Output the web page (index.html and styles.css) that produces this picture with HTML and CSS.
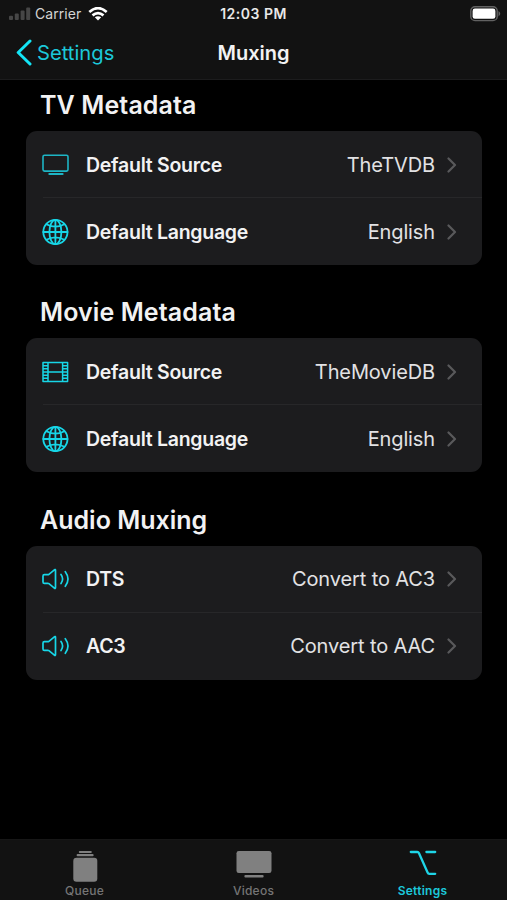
FILE: index.html
```html
<!DOCTYPE html>
<html lang="en">
<head>
<meta charset="utf-8">
<title>Muxing</title>
<link rel="stylesheet" href="styles.css">
</head>
<body>
<svg class="sprite" width="0" height="0" aria-hidden="true">
  <symbol id="tv" viewBox="0 0 28 28"><rect x="1" y="4.3" width="25" height="15.8" rx="1.5"/><path d="M7.3 23H20.6" stroke-width="2"/></symbol>
  <symbol id="globe" viewBox="0 0 28 28"><circle cx="13.4" cy="14" r="12.1"/><ellipse cx="13.4" cy="14" rx="6" ry="12.1"/><path d="M13.4 2V26M1.3 14H25.5M4.4 6.2Q13.4 11.2 22.4 6.2M4.4 21.8Q13.4 16.8 22.4 21.8"/></symbol>
  <symbol id="film" viewBox="0 0 28 28"><path d="M1 4.6H25.6V23.4H1ZM6 4.6V23.4M20.6 4.6V23.4M6 14H20.6M1 7.7H6M1 10.8H6M1 14H6M1 17.2H6M1 20.3H6M20.6 7.7H25.6M20.6 10.8H25.6M20.6 14H25.6M20.6 17.2H25.6M20.6 20.3H25.6"/></symbol>
  <symbol id="speaker" viewBox="0 0 28 28"><path d="M2.4 9.7H5.8Q6.4 9.7 6.9 9.3L12.4 4.8Q13.5 4.1 13.5 5.4V22.6Q13.5 23.9 12.4 23.2L6.9 18.7Q6.4 18.3 5.8 18.3H2.4Q1 18.3 1 16.9V11.1Q1 9.7 2.4 9.7ZM19 9.5Q22.2 14 19 18.5M23.3 6.7Q28.7 14 23.3 21.3" stroke-width="1.7"/></symbol>
  <symbol id="chevron" viewBox="0 0 10 16"><path d="M1.5 1.5L8 8L1.5 14.5" stroke-width="2.2"/></symbol>
</svg>
<div class="screen">
  <header class="header">
    <div class="status">
      <div class="carrier">
        <svg width="22" height="14" viewBox="0 0 22 14" fill="#464646"><rect x="0" y="8.8" width="4" height="4.2" rx="1"/><rect x="5.8" y="6.5" width="4" height="6.5" rx="1"/><rect x="11.6" y="3.5" width="4" height="9.5" rx="1"/><rect x="17.2" y=".5" width="4" height="12.5" rx="1"/></svg>
        <span class="carrier-name">Carrier</span>
        <svg width="20" height="14" viewBox="0 0 20 14" fill="none" stroke="#fff" stroke-width="2.7"><path d="M1.3 5Q10-2.7 18.7 5M4.5 8.4Q10 3.8 15.5 8.4"/><path d="M6.8 10.3Q10 8.1 13.2 10.3L10 13.5Z" fill="#fff" stroke="none"/></svg>
      </div>
      <span class="clock">12:03 PM</span>
      <svg class="battery" width="31" height="16" viewBox="0 0 31 16"><rect x=".8" y=".8" width="26.4" height="13.8" rx="4.2" fill="none" stroke="#626262" stroke-width="1.4"/><rect x="2.6" y="2.6" width="22.8" height="10.2" rx="2.3" fill="#fff"/><path d="M28.5 5Q32 7.7 28.5 10.4Z" fill="#626262"/></svg>
    </div>
    <nav class="nav">
      <a class="back"><svg width="16" height="27" viewBox="0 0 16 27"><path d="M14 2L2.2 13.5L14 25" stroke-width="3"/></svg><span>Settings</span></a>
      <h1>Muxing</h1>
    </nav>
  </header>
  <main class="content">
    <section class="group">
      <h2 class="t-tv">TV Metadata</h2>
      <div class="card">
        <div class="row"><svg class="icon thin"><use href="#tv"/></svg><span class="label">Default Source</span><span class="value">TheTVDB</span><svg class="chevron"><use href="#chevron"/></svg></div>
        <div class="row"><svg class="icon"><use href="#globe"/></svg><span class="label">Default Language</span><span class="value">English</span><svg class="chevron"><use href="#chevron"/></svg></div>
      </div>
    </section>
    <section class="group">
      <h2 class="t-movie">Movie Metadata</h2>
      <div class="card">
        <div class="row"><svg class="icon film"><use href="#film"/></svg><span class="label">Default Source</span><span class="value">TheMovieDB</span><svg class="chevron"><use href="#chevron"/></svg></div>
        <div class="row"><svg class="icon"><use href="#globe"/></svg><span class="label">Default Language</span><span class="value">English</span><svg class="chevron"><use href="#chevron"/></svg></div>
      </div>
    </section>
    <section class="group">
      <h2 class="t-audio">Audio Muxing</h2>
      <div class="card">
        <div class="row"><svg class="icon"><use href="#speaker"/></svg><span class="label">DTS</span><span class="value">Convert to AC3</span><svg class="chevron"><use href="#chevron"/></svg></div>
        <div class="row"><svg class="icon"><use href="#speaker"/></svg><span class="label">AC3</span><span class="value">Convert to AAC</span><svg class="chevron"><use href="#chevron"/></svg></div>
      </div>
    </section>
  </main>
  <footer class="tabs">
    <a class="tab"><svg width="36" height="34" viewBox="0 0 36 34" fill="#808080"><rect x="11.8" y="2" width="13" height="2" rx="1"/><rect x="9.6" y="5" width="17" height="2.2" rx="1"/><rect x="6.3" y="8.7" width="24" height="24" rx="3.2"/></svg><span>Queue</span></a>
    <a class="tab"><svg width="36" height="34" viewBox="0 0 36 34" fill="#808080"><rect x=".5" y="2" width="35" height="22" rx="2.3"/><rect x="8.4" y="26" width="19.2" height="2.6" rx="1"/></svg><span>Videos</span></a>
    <a class="tab active"><svg width="36" height="34" viewBox="0 0 36 34"><path d="M5.8 3H12.3Q13.4 3 13.9 4L22.6 23.5Q23.1 24.8 24.3 24.8H30.2M21.4 3H30.2" stroke-width="2.3"/></svg><span>Settings</span></a>
  </footer>
</div>
</body>
</html>
```
FILE: styles.css
```css
* { box-sizing: border-box; }
body { margin: 0; background: #000; color: #f2f2f3; font-family: Inter, "Liberation Sans", sans-serif; }
h1, h2 { margin: 0; font-weight: 600; white-space: nowrap; }
svg { display: block; flex: none; }
symbol, .icon, .chevron, .back svg, .active svg { fill: none; stroke-linecap: round; stroke-linejoin: round; }
.sprite { position: absolute; }
.screen { width: 507px; height: 900px; display: flex; flex-direction: column; overflow: hidden; }

.header { height: 80px; background: #121212; border-bottom: 1px solid #1c1c1d; }
.status { height: 27px; display: grid; grid-template-columns: 1fr auto 1fr; align-items: center; padding: 0 9px; }
.carrier { display: flex; align-items: center; gap: 5px; }
.carrier-name { font-size: 14px; letter-spacing: .05px; color: #d4d4d4; width: 48px; margin-left: -1px; white-space: nowrap; }
.clock { font-size: 14px; font-weight: 600; letter-spacing: .5px; color: #e8e8e8; }
.battery { justify-self: end; margin-right: -3px; }
.nav { height: 51px; display: grid; grid-template-columns: 1fr auto 1fr; align-items: center; padding: 0 16px; }
.nav h1 { font-size: 20px; line-height: 26px; }
.back { display: flex; align-items: center; gap: 5px; color: #1cc8da; font-size: 20.2px; }
.back svg { stroke: #13e4f5; }

.content { flex: 1; padding: 8px 25px 0 26px; }
.group { height: 207.3px; }
.group h2 { height: 43px; padding: 0 0 0 14px; font-size: 25px; letter-spacing: .1px; line-height: 34px; }
.group .t-audio { letter-spacing: 0; }
.card { height: 134px; background: #1c1c1e; border-radius: 11px; }
.row { height: 67px; display: flex; align-items: center; padding: 0 25px 0 16px; position: relative; }
.row + .row::before { content: ""; position: absolute; top: -1px; left: 17px; right: 0; height: 1px; background: #272729; }
.icon { width: 28px; height: 28px; stroke: #17d6e7; stroke-width: 1.8; }
.thin { stroke: #1db5c5; stroke-width: 1.6; }
.film { stroke-width: 1.5; }
.label { margin-left: 16px; font-size: 19.5px; font-weight: 600; letter-spacing: -.27px; white-space: nowrap; }
.value { margin-left: auto; font-size: 20px; letter-spacing: -.12px; color: #e2e2e4; white-space: nowrap; }
.chevron { width: 10px; height: 16px; margin-left: 12px; stroke: #59595b; }

.tabs { height: 61px; display: grid; grid-template-columns: repeat(3, 1fr); background: #121212; border-top: 1px solid #171717; }
.tab { display: flex; flex-direction: column; align-items: center; padding-top: 9px; color: #757575; font-size: 12px; font-weight: 500; letter-spacing: .25px; line-height: 15px; }
.active { color: #1cc8da; font-weight: 600; }
.active svg { stroke: #1fd5e7; }
```
